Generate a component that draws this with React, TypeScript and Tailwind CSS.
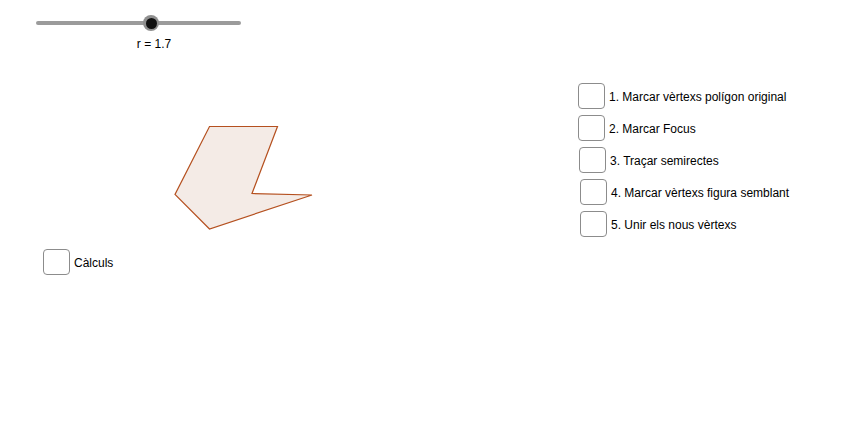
const items = [
  { label: "1. Marcar vèrtexs polígon original", shift: "" },
  { label: "2. Marcar Focus", shift: "" },
  { label: "3. Traçar semirectes", shift: "ml-[1px]" },
  { label: "4. Marcar vèrtexs figura semblant", shift: "ml-[2px]" },
  { label: "5. Unir els nous vèrtexs", shift: "ml-[2px]" },
];

const Box = () => (
  <div className="w-[27px] h-[26px] shrink-0 rounded-[4px] border border-[#8c8c8c] bg-white" />
);

export default function App() {
  return (
    <div
      className="relative w-[851px] h-[439px] bg-white overflow-hidden text-black"
      style={{ fontFamily: '"Liberation Sans", Arial, sans-serif' }}
    >
      {/* slider */}
      <div className="absolute left-[36px] top-[15px] w-[205px] flex flex-col items-center">
        <div className="relative w-full h-[16px] flex items-center">
          <div className="w-full h-[4px] rounded-full bg-[#9b9b9b]" />
          <div className="absolute left-[107px] top-0 w-[16px] h-[16px] rounded-full bg-[#8f8f8f] flex items-center justify-center">
            <div className="w-[11px] h-[11px] rounded-full bg-[#111]" />
          </div>
        </div>
        <div className="mt-[6px] ml-[31px] text-[12px] leading-[14px]">r = 1.7</div>
      </div>

      {/* polygon */}
      <svg className="absolute left-0 top-0" width="851" height="439">
        <polygon
          points="209.5,126.5 277.5,126.5 252,193.5 312,195 209.5,229 175,194.5"
          fill="#f4ebe6"
          stroke="#b5501f"
          strokeWidth="1.2"
          strokeLinejoin="miter"
        />
      </svg>

      {/* checkboxes */}
      <div className="absolute left-[578px] top-[83px] flex flex-col gap-[6px]">
        {items.map((it) => (
          <div key={it.label} className={`flex items-center gap-[4px] ${it.shift}`}>
            <Box />
            <span className="text-[12px] leading-[14px] pt-[2px]">{it.label}</span>
          </div>
        ))}
      </div>

      {/* Calculs */}
      <div className="absolute left-[43px] top-[249px] flex items-center gap-[4px]">
        <Box />
        <span className="text-[12px] leading-[14px] pt-[2px]">Càlculs</span>
      </div>
    </div>
  );
}
